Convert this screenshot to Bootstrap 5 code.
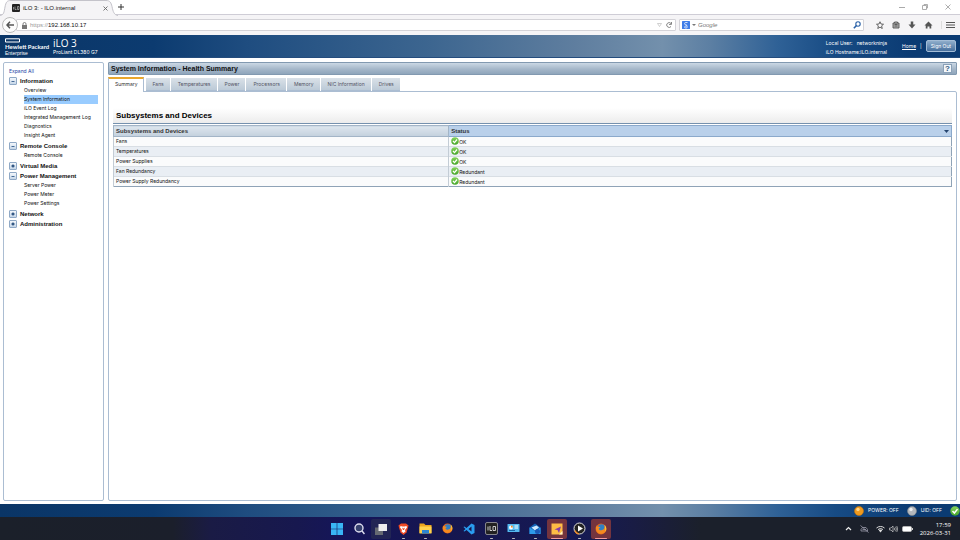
<!DOCTYPE html>
<html lang="en">
<head>
<meta charset="utf-8">
<meta name="viewport" content="width=device-width, initial-scale=1">
<title>iLO 3: - ILO.internal</title>
<link href="https://cdn.jsdelivr.net/npm/bootstrap@5.3.0/dist/css/bootstrap.min.css" rel="stylesheet">
<style>
:root{--ui:Inter,"Liberation Sans",sans-serif;--hd:"Liberation Sans",Arial,sans-serif;--os:"Open Sans","Noto Sans",sans-serif;--band:linear-gradient(90deg,#0a3566 0,#0c3b70 16%,#1f4d80 26%,#3d6690 45%,#5f7e9f 60%,#7390ac 69%,#5c7fa3 74%,#2f6196 81%,#174b84 87%,#0b3b73 95%);}
body{font:5px/9px var(--ui);color:#111;background:#fff;}
button,input{font:inherit;color:inherit;border:0;background:none;padding:0;}
svg{display:block;flex:none;}
ul{list-style:none;}
.win-title{height:15px;background:#fff;border-bottom:1px solid #cfcdd6;}
.win-tab{width:118px;height:15px;font:6px/14px var(--hd);padding:1px 10px 0 12px;gap:3px;}
.win-tab-shape{left:0;top:0;}
.win-tab>:not(.win-tab-shape){position:relative;}
.win-new{width:16px;}
.win-ctl{gap:17px;padding-right:9px;}
.nav-bar{height:20px;background:#f5f4f6;padding:0 5px 0 2px;}
.back-btn{width:16px;height:16px;border:1px solid #bbb;border-radius:50%;background:#fcfcfc;z-index:1;}
.addr-box,.find-box{height:12px;background:#fff;border:1px solid #d4d3d8;border-radius:1px;font:6px/10px var(--hd);}
.addr-box{margin-left:-2px;padding:0 3px 0 5px;}
.find-box{width:185px;padding:0 2px;margin-left:3px;}
.find-box input,.addr-box input{outline:0;min-width:0;}
.find-box input::placeholder{color:#777;font-style:italic;opacity:1;}
.scheme{color:#999;margin-left:3px;}
.tool-set{gap:8px;padding-left:12px;}
.menu-btn{border-left:1px solid #ddd;padding-left:4px;}
.ilo-head{height:23px;color:#fff;background:var(--band);border-bottom:1px solid #244c7d;padding:0 4px 0 5px;}
.hpe-name{font:5px/6px var(--hd);width:48px;padding-top:1px;}
.hpe-name svg{margin-bottom:1px;}
.hpe-name b{font:bold 6px/6px Lato,sans-serif;}
.ilo-name{font:10px/11px var(--os);}
.ilo-model{line-height:6px;}
.user-info{line-height:9px;margin-right:15px;padding-top:3px;}
.sign-btn{height:12px;line-height:10px;border:1px solid #a3bcd6;border-radius:2px;padding:0 4px;background:linear-gradient(#8fadcb,#466f9e);color:#fff;}
.work{padding:4px 3px 3px;gap:4px;}
.side{width:101px;border:1px solid #abbdd2;border-radius:2px;padding:4px 5px;}
.side a{color:#111;text-decoration:none;}
.side .expand{color:#1a3fa5;line-height:9px;}
.grp{height:10px;font:bold 6px/10px var(--hd);color:#111;gap:3px;}
.tog{width:8px;height:8px;border:1px solid #8fa9c6;border-radius:1px;background:linear-gradient(#f4f8fc,#c5d6e8);}
.kids{padding:0 0 1px 15px;}
.kids a{display:block;height:9px;line-height:9px;}
.kids a.on{background:#99ccff;}
.pg-bar{height:13px;font:bold 7px/12px var(--hd);color:#111;background:linear-gradient(#cbd8e4,#a5b7c9 55%,#8fa5bb);border:1px solid #8299b0;border-radius:1px;padding:0 4px 0 2px;}
.help-btn{width:9px;height:9px;background:#f3f7fb;border:1px solid #8ba1b8;color:#31597f;font:bold 8px/7px var(--hd);}
.tab-row{gap:1px;margin-top:2px;padding-left:0;position:relative;z-index:1;margin-bottom:-1px;}
.tab-row button{height:13px;margin-top:1px;line-height:13px;padding:0 6px 0 7px;color:#556;background:linear-gradient(#dae1e8,#bccad7);border-bottom:1px solid #abbdd2;}
.tab-row button.on{height:15px;margin:0 1px 0 0;color:#333;background:#fff;border:1px solid #abbdd2;border-top:2px solid #eaa72c;border-bottom:0;padding:0 5px 2px 6px;line-height:11px;}
.pane{border:1px solid #abbdd2;border-radius:0 2px 2px 2px;padding:16px 4px 4px;}
.sec-head{font:bold 8px/15px var(--hd);color:#000;background:linear-gradient(#fff,#ececec);border-bottom:1px solid #7591ae;padding-left:3px;height:16px;margin:0 0 1px;}
.dev-table{border:1px solid #8fa3b7;border-collapse:collapse;width:100%;margin:0;}
.dev-table th,.dev-table td{height:10px;padding:0 2px;line-height:9px;vertical-align:middle;}
.dev-table th{height:11px;font:bold 6px/9px var(--hd);color:#333;background:linear-gradient(#dde6ee,#c3d0dd);border:1px solid #a3b5c7;}
.dev-table th.sorted{background:#b9d0ea;border-color:#8ba9cb;}
.dev-table td{border-top:1px solid #d8dee4;border-left:1px solid #c3ccd5;background:#fafbfc;}
.dev-table tr:nth-child(even) td{background:#e9eef4;}
.state{height:9px;}
.state span{padding:1px 0 0;line-height:8px;}
.col-name{width:40%;}
.stat-bar{height:13px;color:#fff;background:var(--band);gap:4px;}
.stat-bar svg+span{margin-right:4px;}
.task-bar{display:grid;grid-template-columns:1fr auto 1fr;height:23px;color:#fff;background:linear-gradient(90deg,#1b202a 0,#1b1f2b 18%,#1a1b45 22%,#17184f 31%,#15155a 36%,#15164f 46%,#161a54 60%,#191c44 66%,#1b202b 73%);}
.apps{gap:2px;margin-right:22px;}
.apps button{width:20px;height:20px;border-radius:2px;position:relative;display:flex;align-items:center;justify-content:center;}
.apps .soft{background:#222554;}
.apps .live{background:#74343e;}
.apps .run::after{content:"";position:absolute;bottom:0;width:3px;height:1px;background:#bbb;border-radius:1px;}
.apps .live::after{width:12px;background:#f39a9a;}
.tray{gap:4px;padding-right:9px;}
.tray .quiet{margin:0 3px 0 4px;}
.clock{font:6px/8px var(--os);margin-left:3px;}
</style>
<script src="https://cdn.jsdelivr.net/npm/bootstrap@5.3.0/dist/js/bootstrap.bundle.min.js"></script>
</head>
<body class="d-flex flex-column min-vh-100">
<svg width="0" height="0" class="position-absolute" aria-hidden="true">
  <defs>
    <linearGradient id="gOk" x2="0" y2="1"><stop stop-color="#86d35c"/><stop offset="1" stop-color="#46a52a"/></linearGradient>
    <symbol id="ok" viewBox="0 0 16 16"><circle cx="8" cy="8" r="7.5" fill="url(#gOk)"/><path d="M4 8l3 3.2L12 5" fill="none" stroke="#fff" stroke-width="2.4"/></symbol>
    <symbol id="fox" viewBox="0 0 22 22"><circle cx="11" cy="11" r="10" fill="#e5661c"/><circle cx="12" cy="9" r="6.5" fill="#2f7fc4"/><path d="M2 6c2 1 3 0 5 1l3 1-3 2c0 3 3 4 6 3 4-1 5-4 4-8 4 3 4 9 1 12-5 5-13 3-15-2-1-3-2-6-1-9z" fill="#f58a1f"/><path d="M17 3c4 3 5 9 2 13 0-4 0-9-2-13z" fill="#ffcf3a"/></symbol>
    <symbol id="plus" viewBox="0 0 6 6"><path d="M1.5 3h3M3 1.500v3" stroke="#234a7a" stroke-width="1.300"/></symbol>
    <symbol id="minus" viewBox="0 0 6 6"><path d="M1.500 3.500h3" stroke="#456a96"/></symbol>
  </defs>
</svg>

<header class="win-title d-flex align-items-stretch">
  <div class="win-tab position-relative d-flex align-items-center">
    <svg class="win-tab-shape position-absolute" width="118" height="16" viewBox="0 0 118 16"><path d="M0 15.500C4 15 4 12 5 7 6 2 7 .5 11 .5h95c4 0 5 2 6 6 1 5 2 8.500 6 9" fill="#f5f4f6" stroke="#c4c3ca"/></svg>
    <svg width="8" height="8" viewBox="0 0 16 16"><rect width="16" height="16" rx="2" fill="#222"/><path d="M3 6v5M6 5v6h3M11 5h3v6h-3z" fill="none" stroke="#ccc" stroke-width="1.200"/></svg>
    <span class="flex-grow-1 text-nowrap">iLO 3: - ILO.internal</span>
    <button aria-label="Close tab"><svg width="5" height="5" viewBox="0 0 5 5"><path d="M.5.5l4 4M4.500.5l-4 4" stroke="#666" stroke-width=".9"/></svg></button>
  </div>
  <button class="win-new" aria-label="New tab"><svg width="6" height="6" viewBox="0 0 6 6"><path d="M3 0v6M0 3h6" stroke="#333"/></svg></button>
  <div class="win-ctl ms-auto d-flex align-items-center">
    <button aria-label="Minimize"><svg width="6" height="6" viewBox="0 0 6 6"><path d="M0 3.500h6" stroke="#aaa"/></svg></button>
    <button aria-label="Restore"><svg width="6" height="6" viewBox="0 0 6 6"><path d="M.5 1.500h4v4h-4zM2 1.500v-1h3.500v3.500h-1" fill="none" stroke="#999" stroke-width=".8"/></svg></button>
    <button aria-label="Close"><svg width="6" height="6" viewBox="0 0 6 6"><path d="M.5.5l5 5M5.500.5l-5 5" stroke="#999" stroke-width=".8"/></svg></button>
  </div>
</header>

<nav class="nav-bar d-flex align-items-center" aria-label="Browser">
  <button class="back-btn d-flex align-items-center justify-content-center" aria-label="Back"><svg width="8" height="8" viewBox="0 0 8 8"><path d="M4 .8L1 4l3 3.200M1 4h7" fill="none" stroke="#555" stroke-width="1.500"/></svg></button>
  <div class="addr-box flex-grow-1 d-flex align-items-center">
    <svg width="5" height="7" viewBox="0 0 5 7"><path d="M0 3h5v4H0z" fill="#777"/><path d="M1 3.500V2a1.500 1.500 0 0 1 3 0v1.500" fill="none" stroke="#777" stroke-width=".9"/></svg>
    <span class="scheme">https://</span><input class="flex-grow-1" aria-label="Address" value="192.168.10.17">
    <svg width="5" height="4" viewBox="0 0 5 4"><path d="M.5.5h4L2.500 3.500z" fill="none" stroke="#bbb" stroke-width=".7"/></svg>
    <button aria-label="Reload" class="ms-1"><svg width="6" height="6" viewBox="0 0 6 6"><path d="M5 1.500A2.400 2.400 0 1 0 5 4.500M5.500 0v2.400H3" fill="none" stroke="#777" stroke-width=".9"/></svg></button>
  </div>
  <div class="find-box d-flex align-items-center">
    <svg width="8" height="8" viewBox="0 0 16 16"><rect width="16" height="16" rx="1" fill="#3f7de8"/><path d="M11 3H7.500a2.200 2.200 0 1 0 0 4.500C11 7.500 9 9 9 10c3 1 2 4-1.500 4S4 10 9 10" fill="none" stroke="#fff" stroke-width="1.500"/></svg>
    <svg width="8" height="4" viewBox="0 0 8 4"><path d="M2 1h4L4 3z" fill="#777"/></svg>
    <input class="flex-grow-1" aria-label="Search" placeholder="Google">
    <button aria-label="Go"><svg width="8" height="8" viewBox="0 0 8 8"><circle cx="5" cy="3" r="2.200" fill="none" stroke="#2b62a8" stroke-width="1.100"/><path d="M3.400 4.600L.8 7.200" stroke="#2b62a8" stroke-width="1.500"/></svg></button>
  </div>
  <div class="tool-set d-flex align-items-center">
    <button aria-label="Bookmark"><svg width="8" height="8" viewBox="0 0 16 16"><path d="M8 1.500l2 4.500 5 .5-3.800 3.300L12.500 15 8 12.300 3.500 15l1.300-5.200L1 6.500 6 6z" fill="none" stroke="#555" stroke-width="1.800"/></svg></button>
    <button aria-label="Reading list"><svg width="8" height="8" viewBox="0 0 16 16"><path d="M2 4h12v10H2z" fill="#aaa" stroke="#555" stroke-width="1.800"/><path d="M5 4V2h6v2M5 7h6M5 10h6" fill="none" stroke="#555" stroke-width="1.800"/></svg></button>
    <button aria-label="Downloads"><svg width="8" height="8" viewBox="0 0 16 16"><path d="M5.500 1h5v6H15l-7 8-7-8h4.500z" fill="#555"/></svg></button>
    <button aria-label="Home page"><svg width="9" height="8" viewBox="0 0 18 16"><path d="M9 1l8 8h-2.500v6H11v-4H7v4H3.500V9H1z" fill="#555"/></svg></button>
    <button class="menu-btn" aria-label="Menu"><svg width="9" height="8" viewBox="0 0 9 8"><path d="M0 1.500h9M0 4h9M0 6.500h9" stroke="#555" stroke-width="1.200"/></svg></button>
  </div>
</nav>

<header class="ilo-head d-flex align-items-center">
  <div class="hpe-name">
    <svg width="15" height="5" viewBox="0 0 15 5"><path d="M.5.8h14v3.200H.5z" fill="none" stroke="#fff"/></svg>
    <b class="d-block text-nowrap">Hewlett Packard</b><span class="d-block">Enterprise</span>
  </div>
  <div><div class="ilo-name">iLO 3</div><div class="ilo-model">ProLiant DL380 G7</div></div>
  <div class="user-info ms-auto"><div class="d-flex justify-content-between"><span>Local User:</span><span>networkninja</span></div><div>iLO Hostname:ILO.internal</div></div>
  <a href="#" class="text-white">Home</a><span class="mx-1">|</span>
  <button class="sign-btn">Sign Out</button>
</header>

<main class="work d-flex flex-grow-1">
  <nav class="side flex-shrink-0" aria-label="Sections">
    <a href="#" class="expand d-block">Expand All</a>
    <ul class="m-0 p-0">
      <li><div class="grp d-flex align-items-center"><button class="tog" aria-label="Collapse Information"><svg width="6" height="6"><use href="#minus"/></svg></button>Information</div>
        <ul class="kids"><li><a href="#">Overview</a></li><li><a href="#" class="on">System Information</a></li><li><a href="#">iLO Event Log</a></li><li><a href="#">Integrated Management Log</a></li><li><a href="#">Diagnostics</a></li><li><a href="#">Insight Agent</a></li></ul></li>
      <li><div class="grp d-flex align-items-center"><button class="tog" aria-label="Collapse Remote Console"><svg width="6" height="6"><use href="#minus"/></svg></button>Remote Console</div>
        <ul class="kids"><li><a href="#">Remote Console</a></li></ul></li>
      <li><div class="grp d-flex align-items-center"><button class="tog" aria-label="Expand Virtual Media"><svg width="6" height="6"><use href="#plus"/></svg></button>Virtual Media</div></li>
      <li><div class="grp d-flex align-items-center"><button class="tog" aria-label="Collapse Power Management"><svg width="6" height="6"><use href="#minus"/></svg></button>Power Management</div>
        <ul class="kids"><li><a href="#">Server Power</a></li><li><a href="#">Power Meter</a></li><li><a href="#">Power Settings</a></li></ul></li>
      <li><div class="grp d-flex align-items-center"><button class="tog" aria-label="Expand Network"><svg width="6" height="6"><use href="#plus"/></svg></button>Network</div></li>
      <li><div class="grp d-flex align-items-center"><button class="tog" aria-label="Expand Administration"><svg width="6" height="6"><use href="#plus"/></svg></button>Administration</div></li>
    </ul>
  </nav>

  <section class="d-flex flex-column flex-grow-1">
    <h1 class="pg-bar d-flex align-items-center m-0">System Information - Health Summary<button class="help-btn ms-auto" aria-label="Help">?</button></h1>
    <div class="tab-row d-flex" role="tablist">
      <button role="tab" class="on" aria-selected="true">Summary</button><button role="tab">Fans</button><button role="tab">Temperatures</button><button role="tab">Power</button><button role="tab">Processors</button><button role="tab">Memory</button><button role="tab">NIC Information</button><button role="tab">Drives</button>
    </div>
    <div class="pane flex-grow-1">
      <h2 class="sec-head">Subsystems and Devices</h2>
      <table class="dev-table">
        <thead><tr><th class="col-name" scope="col">Subsystems and Devices</th><th class="sorted" scope="col"><div class="d-flex align-items-center justify-content-between">Status<svg width="5" height="3" viewBox="0 0 5 3"><path d="M0 0h5L2.500 3z" fill="#24446e"/></svg></div></th></tr></thead>
        <tbody>
          <tr><td>Fans</td><td><div class="state d-flex align-items-start"><svg width="8" height="8"><use href="#ok"/></svg><span>OK</span></div></td></tr>
          <tr><td>Temperatures</td><td><div class="state d-flex align-items-start"><svg width="8" height="8"><use href="#ok"/></svg><span>OK</span></div></td></tr>
          <tr><td>Power Supplies</td><td><div class="state d-flex align-items-start"><svg width="8" height="8"><use href="#ok"/></svg><span>OK</span></div></td></tr>
          <tr><td>Fan Redundancy</td><td><div class="state d-flex align-items-start"><svg width="8" height="8"><use href="#ok"/></svg><span>Redundant</span></div></td></tr>
          <tr><td>Power Supply Redundancy</td><td><div class="state d-flex align-items-start"><svg width="8" height="8"><use href="#ok"/></svg><span>Redundant</span></div></td></tr>
        </tbody>
      </table>
    </div>
  </section>
</main>

<footer>
  <div class="stat-bar d-flex align-items-center justify-content-end">
    <svg width="10" height="10" viewBox="0 0 10 10"><circle cx="5" cy="5" r="4.500" fill="#ef9a1e" stroke="#c8760c" stroke-width=".6"/><circle cx="4" cy="3.500" r="1.700" fill="#ffd489"/></svg><span>POWER: OFF</span>
    <svg width="10" height="10" viewBox="0 0 10 10"><circle cx="5" cy="5" r="4.500" fill="#b4b8bd" stroke="#85898f" stroke-width=".6"/><circle cx="4" cy="3.500" r="1.700" fill="#eceef0"/></svg><span>UID: OFF</span>
    <svg width="10" height="10"><use href="#ok"/></svg>
  </div>
  <div class="task-bar align-items-center">
    <div></div>
    <div class="apps d-flex">
      <button aria-label="Start"><svg width="12" height="12" viewBox="0 0 12 12"><path d="M0 0h5.700v5.700H0zM6.300 0H12v5.700H6.300zM0 6.300h5.700V12H0zM6.300 6.300H12V12H6.300z" fill="#39b6f5"/></svg></button>
      <button aria-label="Search"><svg width="11" height="12" viewBox="0 0 11 12"><circle cx="5" cy="5" r="4" fill="#35406e" stroke="#dde" stroke-width="1.400"/><path d="M8 8l2.500 3" stroke="#dde" stroke-width="1.500"/></svg></button>
      <button class="soft" aria-label="Task view"><svg width="12" height="12" viewBox="0 0 12 12"><path d="M0 4.500h8V12H0z" fill="#666a72"/><path d="M3.500 1H12v7H3.500z" fill="#eee"/></svg></button>
      <button class="run" aria-label="Brave"><svg width="11" height="12" viewBox="0 0 22 24"><path d="M6 1h10l5 4-1 4-3 10-6 5-6-5L2 9 1 5z" fill="#f04a24"/><path d="M5 6l4 1h4l4-1 1 3-4 5 1 3-4 3-4-3 1-3-4-5z" fill="#fff"/><path d="M8 9l3 2 3-2-2 5h-2z" fill="#f04a24"/></svg></button>
      <button class="run" aria-label="File Explorer"><svg width="13" height="11" viewBox="0 0 26 22"><path d="M1 1h9l3 3h12v16H1z" fill="#eba51e"/><path d="M1 7h24v14H1z" fill="#ffd24d"/><path d="M6 14h14v7H6z" fill="#2b84d4"/></svg></button>
      <button aria-label="Firefox"><svg width="11" height="11"><use href="#fox"/></svg></button>
      <button aria-label="Code"><svg width="12" height="12" viewBox="0 0 24 24"><path d="M17 1l6 3v16l-6 3L7 14l-4 3-2-1 4-4-4-4 2-1 4 3zM17 7l-6 5 6 5z" fill="#2a9df0" fill-rule="evenodd"/></svg></button>
      <button class="run" aria-label="iLO"><svg width="13" height="13" viewBox="0 0 26 26"><rect x="1" y="1" width="24" height="24" rx="3" fill="#222" stroke="#aaa" stroke-width="1.500"/><path d="M6 9v8M10 8v9h4M16 9h5v8h-5z" fill="none" stroke="#ddd" stroke-width="1.800"/></svg></button>
      <button class="run" aria-label="Control panel"><svg width="13" height="11" viewBox="0 0 26 22"><rect x="1" y="2" width="24" height="16" rx="1" fill="#55b9ef"/><circle cx="8" cy="9" r="4" fill="#fff"/><path d="M8 5v4h4a4 4 0 0 0-4-4z" fill="#f08a24"/><path d="M15 6h7M15 10h7" stroke="#fff" stroke-width="2"/><path d="M4 15h12" stroke="#1867a8" stroke-width="2"/></svg></button>
      <button class="run" aria-label="Mail"><svg width="12" height="12" viewBox="0 0 24 24"><path d="M1 9L12 1l11 8v13H1z" fill="#1565b8"/><path d="M5 9l10-4 5 4-8 6z" fill="#cfe9ff"/><path d="M1 9l11 7 11-7v13H1z" fill="#2e9bea"/><circle cx="17" cy="17" r="5" fill="#1b58b5"/></svg></button>
      <button class="run live" aria-label="Notes"><svg width="12" height="12" viewBox="0 0 24 24"><path d="M1 1h22v22H1z" fill="#ffbd45"/><path d="M7 13l13-6-4 13-3-6z" fill="#8a3fa5"/><path d="M16 23l7-7v7z" fill="#fff0c5"/></svg></button>
      <button class="run" aria-label="Player"><svg width="13" height="13" viewBox="0 0 26 26"><circle cx="13" cy="13" r="11" fill="#222" stroke="#ddd" stroke-width="2"/><path d="M4 17a10 10 0 0 0 8 7" fill="none" stroke="#ee8a25" stroke-width="2.500"/><path d="M10 7l10 6-10 6z" fill="#fff"/></svg></button>
      <button class="run live" aria-label="Firefox window"><svg width="12" height="12"><use href="#fox"/></svg></button>
    </div>
    <div class="tray d-flex align-items-center justify-content-end">
      <svg width="7" height="5" viewBox="0 0 7 5"><path d="M1 4l2.500-2.500L6 4" fill="none" stroke="#eee" stroke-width="1.200"/></svg>
      <svg class="quiet" width="9" height="8" viewBox="0 0 18 16"><path d="M2 12V9l3-4h7l3 4v3zM1 1l16 14M5 9h7" fill="none" stroke="#99a" stroke-width="1.600"/></svg>
      <svg width="9" height="8" viewBox="0 0 18 16"><path d="M1 6a12 12 0 0 1 16 0M4 9a8 8 0 0 1 10 0" fill="none" stroke="#ddd" stroke-width="2"/><path d="M5.500 10.500a5 5 0 0 1 7 0L9 15z" fill="#ddd"/></svg>
      <svg width="9" height="8" viewBox="0 0 18 16"><path d="M1 6h3l4-4v12l-4-4H1zM10.500 5.500q2 2.500 0 5M13 3.500q3.500 4.500 0 9M15.500 2q4 6 0 12" fill="none" stroke="#ccc" stroke-width="1.400"/></svg>
      <svg width="11" height="6" viewBox="0 0 11 6"><rect x=".5" y=".5" width="9" height="5" rx="1.200" fill="#fff" stroke="#bbb" stroke-width=".8"/><path d="M10.500 2v2" stroke="#ccc"/></svg>
      <div class="clock text-end"><div>17:59</div><div>2026-03-31</div></div>
    </div>
  </div>
</footer>
</body>
</html>
